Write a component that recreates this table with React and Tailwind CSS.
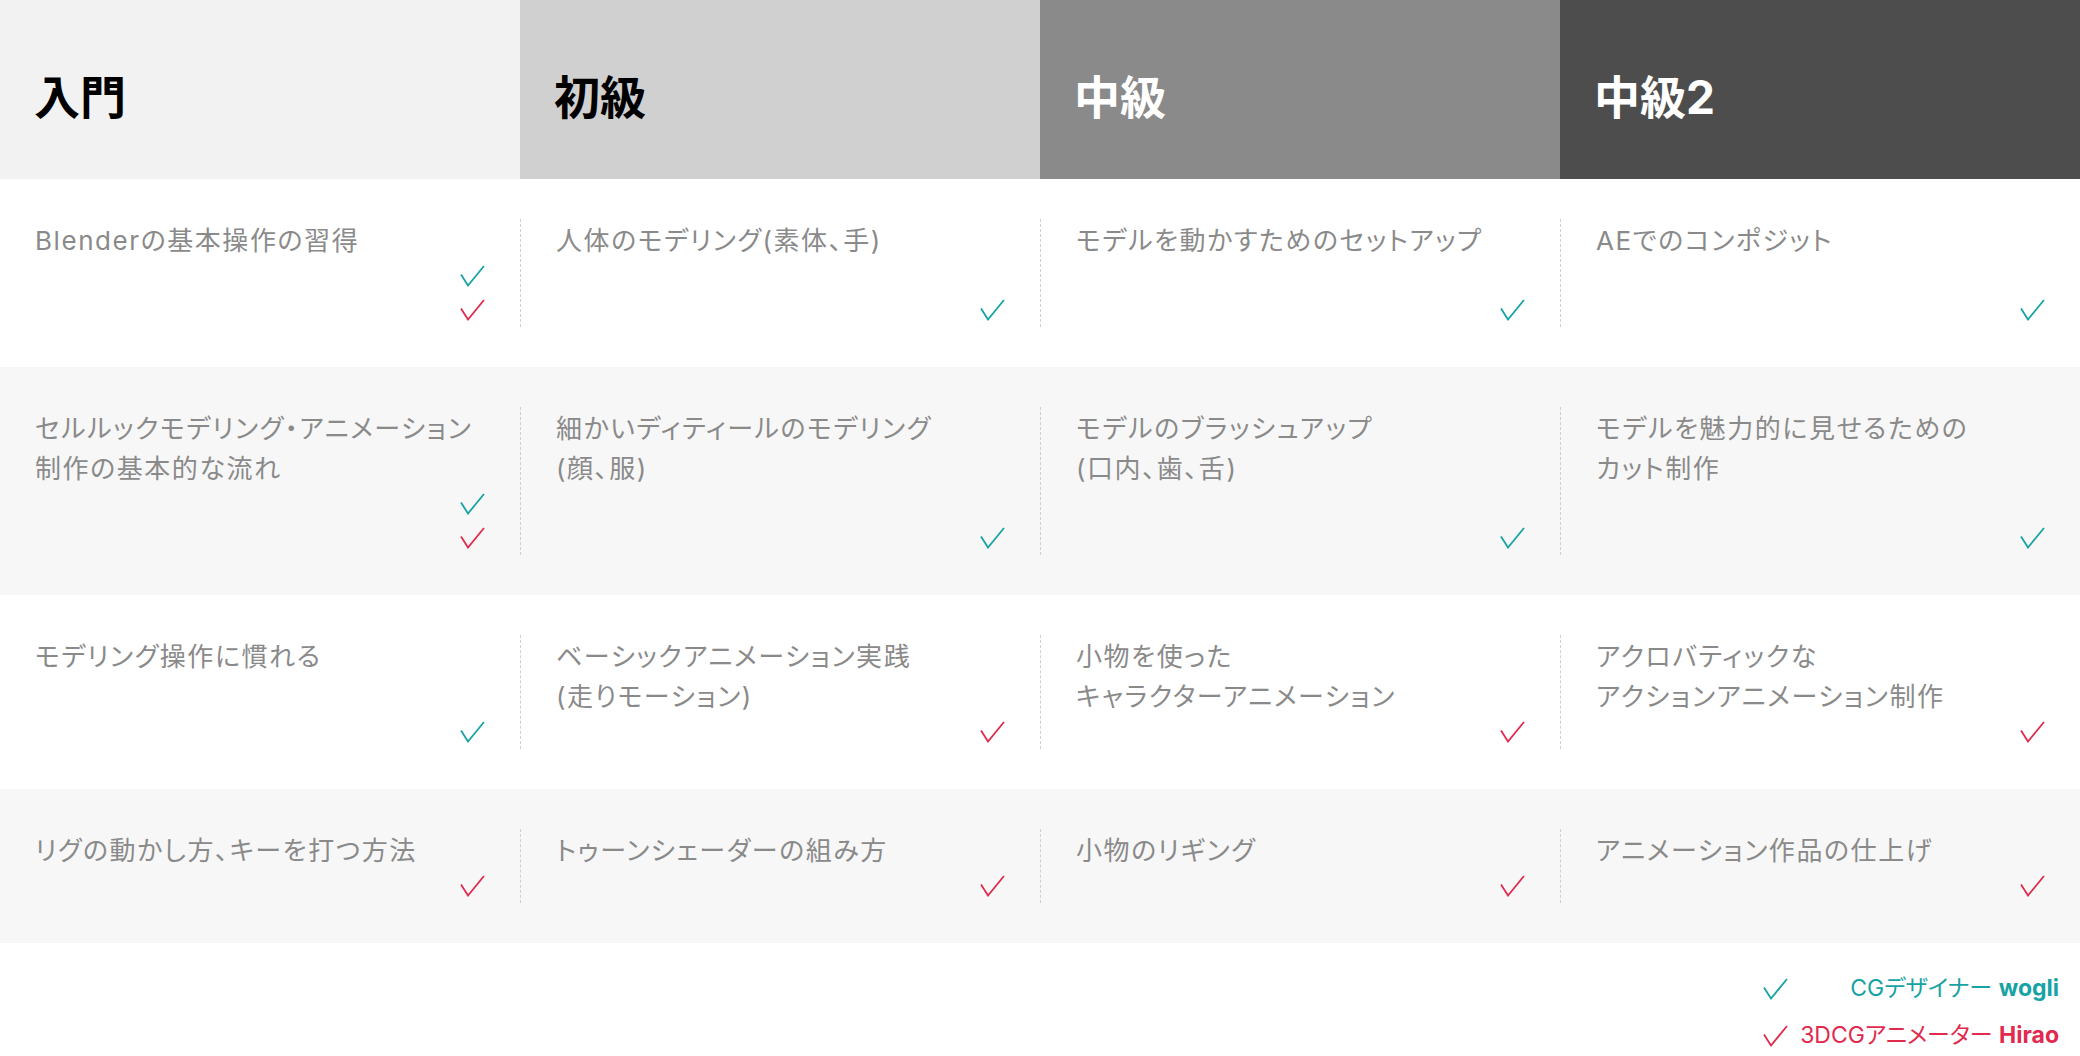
const TEAL = '#17a2a4';
const RED = '#e12a4d';

const headers = [
  { label: '入門', cls: 'bg-[#f2f2f2] text-black' },
  { label: '初級', cls: 'bg-[#d0d0d0] text-black' },
  { label: '中級', cls: 'bg-[#8a8a8a] text-white' },
  { label: '中級2', cls: 'bg-[#4d4d4d] text-white' },
];

const rows = [
  {
    bg: 'bg-white',
    cells: [
      { t: ['Blenderの基本操作の習得'], c: ['teal', 'red'] },
      { t: ['人体のモデリング(素体、手)'], c: ['teal'] },
      { t: ['モデルを動かすためのセットアップ'], c: ['teal'] },
      { t: ['AEでのコンポジット'], c: ['teal'] },
    ],
  },
  {
    bg: 'bg-[#f7f7f7]',
    cells: [
      { t: ['セルルックモデリング・アニメーション', '制作の基本的な流れ'], c: ['teal', 'red'] },
      { t: ['細かいディティールのモデリング', '(顔、服)'], c: ['teal'] },
      { t: ['モデルのブラッシュアップ', '(口内、歯、舌)'], c: ['teal'] },
      { t: ['モデルを魅力的に見せるための', 'カット制作'], c: ['teal'] },
    ],
  },
  {
    bg: 'bg-white',
    cells: [
      { t: ['モデリング操作に慣れる'], c: ['teal'] },
      { t: ['ベーシックアニメーション実践', '(走りモーション)'], c: ['red'] },
      { t: ['小物を使った', 'キャラクターアニメーション'], c: ['red'] },
      { t: ['アクロバティックな', 'アクションアニメーション制作'], c: ['red'] },
    ],
  },
  {
    bg: 'bg-[#f7f7f7]',
    cells: [
      { t: ['リグの動かし方、キーを打つ方法'], c: ['red'] },
      { t: ['トゥーンシェーダーの組み方'], c: ['red'] },
      { t: ['小物のリギング'], c: ['red'] },
      { t: ['アニメーション作品の仕上げ'], c: ['red'] },
    ],
  },
];

function Check({ color }) {
  return (
    <svg width="25" height="22" viewBox="0 0 25 22" fill="none">
      <polyline points="1,9.5 8,20.5 24,1" stroke={color} strokeWidth="1.8" strokeLinejoin="miter" />
    </svg>
  );
}

export default function App() {
  return (
    <div className="w-[2080px] bg-white font-[Inter,'Noto_Sans_CJK_JP',sans-serif] [font-feature-settings:'palt']">
      <div className="grid grid-cols-4 h-[179px]">
        {headers.map(h => (
          <div key={h.label} className={`${h.cls} flex items-center pl-[34px] pt-[15px]`}>
            <span className="text-[46px] font-bold leading-none">{h.label}</span>
          </div>
        ))}
      </div>

      {rows.map((row, i) => (
        <div key={i} className={`${row.bg} grid grid-cols-4 py-[40px]`}>
          {row.cells.map((cell, j) => (
            <div
              key={j}
              className={`flex flex-col justify-between pl-[35px] pr-[35px] ${j > 0 ? 'border-l border-dashed border-[#cfcfcf]' : ''}`}
            >
              <div className="text-[26px] leading-[40px] tracking-[0.06em] text-[#8a8a8a] pt-[2px]">
                {cell.t.map(line => (
                  <div key={line}>{line}</div>
                ))}
              </div>
              <div className="flex flex-col items-end -mt-[2px]">
                {cell.c.map(c => (
                  <div key={c} className="h-[34px] flex items-center">
                    <Check color={c === 'teal' ? TEAL : RED} />
                  </div>
                ))}
              </div>
            </div>
          ))}
        </div>
      ))}

      <div className="flex justify-end pt-[22px] pr-[21px]">
        <div className="w-[296px] text-[23px]">
          <div className="h-[47px] flex items-center justify-between">
            <Check color={TEAL} />
            <span className="text-[#17a2a4]">
              CGデザイナー <span className="font-bold">wogli</span>
            </span>
          </div>
          <div className="h-[47px] flex items-center justify-between">
            <Check color={RED} />
            <span className="text-[#e12a4d]">
              3DCGアニメーター <span className="font-bold">Hirao</span>
            </span>
          </div>
        </div>
      </div>
    </div>
  );
}
